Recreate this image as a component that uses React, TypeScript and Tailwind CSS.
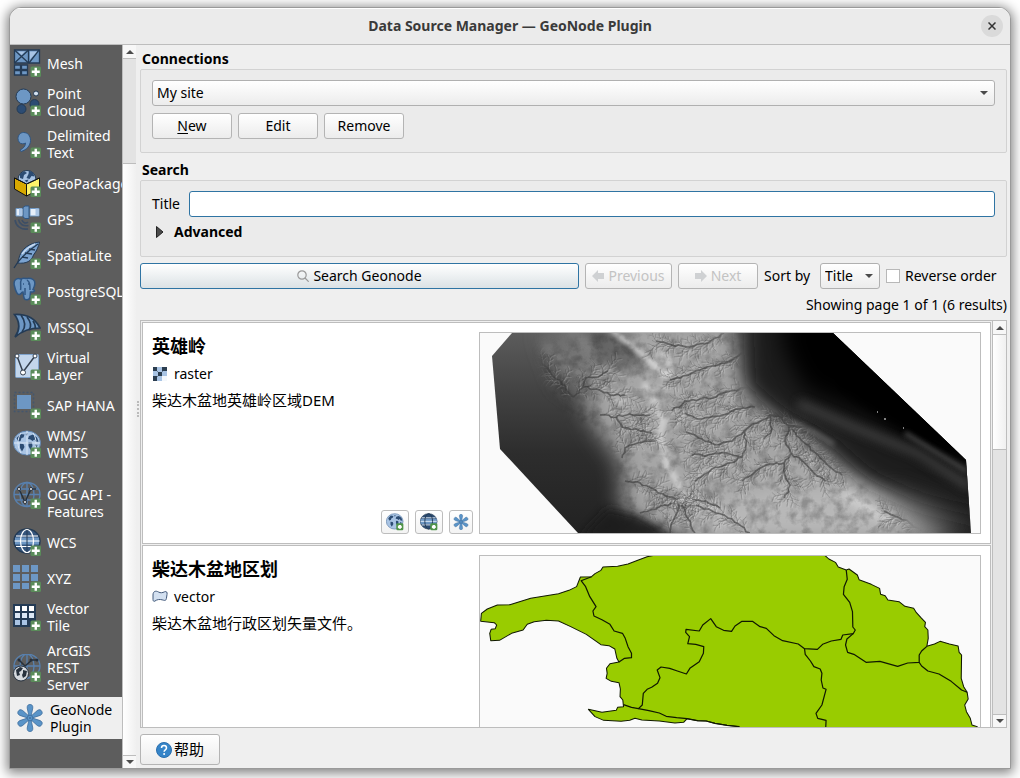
import React from "react";

type Pt = [number, number];

const INK = "#243b55";
const BLUE = "#6d97c4";
const LIGHT = "#a9c4e4";

/* ---------- sidebar icons ---------- */

function Badge() {
  return (
    <g>
      <rect x="17.5" y="17.5" width="10.500" height="10.500" rx="1.5" fill="#5a8c5a" />
      <path d="M22.750 18.800v8M18.750 22.800h8" stroke="#fff" strokeWidth="2.400" />
    </g>
  );
}

function Icon({ children, badge = true }: { children: React.ReactNode; badge?: boolean }) {
  return (
    <svg viewBox="0 0 28 28" className="h-7 w-7 shrink-0" fill="none" aria-hidden="true">
      {children}
      {badge && <Badge />}
    </svg>
  );
}

const GlobeLand = () => (
  <path
    d="M3.500 8l4-4 4 .5-1 3-2 .5-1 3-2.500.5zM7 13.500l3.500.5 1 3-2.500 4.500-2-3.500zM12.500 4l2.500-1-1 3zM16 6l4-1.500 4 3 1.500 4-2.500.5-1.500-2.500-2 1.500-2-1.500-2.500-.5zM15.500 12l3.500.5.5 3.500-2 4-2-4zM22 14l2.500 1-1 2.500-1.500-1z"
    fill="#2c4c73"
  />
);

const icons: Record<string, React.ReactNode> = {
  mesh: (
    <Icon>
      <g fill={BLUE} stroke={INK} strokeWidth="1.3">
        <path d="M1.500 1h14v13h-14zM15.500 1h11v13h-11z" />
        <path d="M1.500 1l14 13M15.500 1l-14 13M26 1L16 14" />
        <path d="M1.500 16h6v4.500h-6zM8.500 16h6v4.500h-6zM1.500 21.500h6v4.500h-6zM8.500 21.500h6v4.500h-6z" />
      </g>
      <path d="M17 2.500h7l-7 8zM5 2.500h7L8.500 6z" fill={LIGHT} />
    </Icon>
  ),
  point: (
    <Icon>
      <circle cx="10.500" cy="8.500" r="7.500" fill={BLUE} stroke={INK} />
      <circle cx="23" cy="5.500" r="2.500" fill="#d3e0f0" stroke={INK} />
      <circle cx="21.500" cy="16" r="4.500" fill="#2c4c73" stroke={INK} />
      <circle cx="8.500" cy="21" r="4.500" fill="#2c4c73" stroke={INK} />
    </Icon>
  ),
  comma: (
    <Icon>
      <path
        d="M10.500 2.500c4.500 0 7 3.500 7 8 0 5-4 9.500-9.500 11l-1-1.500c3.500-1.500 5.500-4 5.500-7-1 .7-2 .8-3 .8C6.500 13.800 5 11 5 8.500c0-3.500 2.500-6 5.500-6z"
        fill={BLUE}
        stroke="#2f5683"
      />
    </Icon>
  ),
  geopackage: (
    <Icon>
      <path d="M1.500 9l12 6v12l-12-7z" fill="#d8a900" stroke="#111" />
      <path d="M26.500 9l-13 6v12l13-7z" fill="#fdf36a" stroke="#111" />
      <path d="M5 10.500A9 9 0 1 1 23 10.500L13.500 15z" fill={LIGHT} stroke={INK} />
      <path d="M7 5l4-3 3 2-3 2-1 4-3-1zM16 1.500l4 2 1.500 4-3-.5-2 3-3-1 2-4zM11.500 11.500l4-1-1.500 3z" fill="#2c4c73" />
      <path d="M1.500 9l12 6 13-6" stroke="#111" />
    </Icon>
  ),
  gps: (
    <Icon>
      <path d="M3 3.500h8v7.500H3zM17 3.500h9V11h-9z" fill="#e6effa" stroke={BLUE} />
      <path d="M7.500 3.500V11M24 3.500V11" stroke={LIGHT} strokeWidth="3" />
      <path d="M10 2.500l2-1.500h4v12.500h-4L10 12z" fill={BLUE} stroke="#2f5683" />
      <path d="M15 17c-2 2-5 1-6-2M15.500 20.500c-5 1-9-1-10-6M15 24C8 25 3 21 2 15" stroke="#3c4e66" strokeWidth="1.600" />
    </Icon>
  ),
  feather: (
    <Icon>
      <path d="M26.500 1c-9 1-19 6-21 18l-1 3c9 1 14-2 16-8 3-4 5-8 6-13z" fill="#7ba3d0" stroke={INK} />
      <path d="M1 27C6 18 15 10 25 3M9 16l6 1M12 12l7 1M16 8l6 1" stroke={INK} strokeWidth="1.400" />
      <path d="M9 13c4-5 8-8 13-10" stroke="#c8dbf1" strokeWidth="1.500" />
    </Icon>
  ),
  postgres: (
    <Icon>
      <path
        d="M8 2C3 0 0 4 1.500 9c1 5 3 9 5 8.500 2-.5 2-2.500 3.500-2.500l1 6c1 3 6 2 6-1l.5-5c5 0 4.500-2 2.500-2.500 2-4 3-8 0-10-3-2-5-1-7-1-2-.5-3.500-.5-5 .5z"
        fill={BLUE}
        stroke="#2f5683"
        strokeWidth="1.500"
      />
      <path d="M8.500 2c-2 4 0 7-1 11M14 3c3 2 3 5 3 10M12 11v7M10 7h1M15 7h1" stroke="#2f5683" strokeWidth="1.500" />
    </Icon>
  ),
  mssql: (
    <Icon>
      <path d="M1.500 1.500C12 1 22 5 27 15c-9 0-18 3-25 9 5-7 5-15-.5-22.500z" fill={BLUE} stroke={INK} strokeWidth="1.700" />
      <path d="M8 2c5 7 5 12 1 17M14 4c4 5 5 9 2 13M20 8c2 3 3 5 2 8" stroke={INK} strokeWidth="1.700" />
    </Icon>
  ),
  virtual: (
    <Icon>
      <rect x="2.500" y="2.500" width="23" height="23" rx="1" fill="#c3d6ec" stroke="#7fa3cc" />
      <path d="M4 4l6 16L22 4" stroke="#34404f" strokeWidth="1.500" />
      <g fill="#fff" stroke="#34404f">
        <circle cx="4" cy="4" r="2" />
        <circle cx="22" cy="4" r="2" />
        <circle cx="10" cy="20.500" r="2.500" />
      </g>
    </Icon>
  ),
  hana: (
    <Icon>
      <rect x="1.500" y="1.500" width="19" height="19" stroke="#43566e" strokeWidth="1.500" strokeDasharray="2 2" />
      <rect x="4" y="4" width="14" height="14" fill={BLUE} />
    </Icon>
  ),
  wms: (
    <Icon>
      <ellipse cx="14" cy="13" rx="13.500" ry="12" fill={LIGHT} stroke="#6288b4" />
      <GlobeLand />
      <path d="M1 13h26M14 1v24M8 3C4 9 4 17 8 23M20 3c4 6 4 14 0 20" stroke="#d9e6f5" strokeWidth="1" />
    </Icon>
  ),
  wfs: (
    <Icon>
      <g stroke="#5880ae" strokeWidth="1.400">
        <ellipse cx="14" cy="13.500" rx="13" ry="12" />
        <ellipse cx="14" cy="13.500" rx="7" ry="12" />
        <path d="M1 13.500h26M3 8h22M3 19h22M14 2v23" />
      </g>
      <path d="M6 8l6 13 6-13h5" stroke="#26303c" strokeWidth="1.500" />
      <g fill="#fff" stroke="#26303c">
        <circle cx="6" cy="8" r="1.500" />
        <circle cx="18" cy="8" r="1.500" />
        <circle cx="12" cy="21" r="1.500" />
      </g>
    </Icon>
  ),
  wcs: (
    <Icon>
      <ellipse cx="14" cy="13" rx="13" ry="12" fill="#35557c" stroke={INK} strokeWidth="1.500" />
      <path d="M2 9.500h24v7H2z" fill={BLUE} />
      <path d="M1.500 13h25M3 8h22M3 18.500h22" stroke="#fff" strokeWidth="1.200" />
      <ellipse cx="14" cy="13" rx="6.500" ry="11.500" stroke="#fff" strokeWidth="1.200" />
      <path d="M14 2v22" stroke={INK} />
    </Icon>
  ),
  xyz: (
    <Icon>
      <path
        d="M0 1h7v7H0zM9 1h7v7H9zM18 1h7v7h-7zM0 10h7v7H0zM9 10h7v7H9zM18 10h7v7h-7zM0 19h7v6H0zM9 19h7v6H9z"
        fill={BLUE}
      />
    </Icon>
  ),
  tile: (
    <Icon>
      <rect x="0" y="1" width="23" height="23" fill={INK} />
      <path d="M2 3h5v5H2zM9 3h5v5H9zM16 3h5v5h-5z" fill="#fff" />
      <path d="M2 10h5v5H2zM9 10h5v5H9zM16 10h5v5h-5z" fill="#dbe7f5" />
      <path d="M2 17h5v5H2zM9 17h5v5H9z" fill={LIGHT} />
    </Icon>
  ),
  arcgis: (
    <Icon>
      <g stroke="#5880ae" strokeWidth="1.300">
        <ellipse cx="14" cy="12" rx="13" ry="12" />
        <ellipse cx="14" cy="12" rx="7" ry="12" />
        <path d="M1 12h26M14 0v24" />
      </g>
      <path d="M6 6l6 6 7-6h5" stroke="#26303c" strokeWidth="1.500" />
      <g fill="#26303c">
        <circle cx="6" cy="6" r="1.500" />
        <circle cx="18" cy="6" r="1.500" />
        <circle cx="24" cy="6" r="1.500" />
      </g>
      <circle cx="8" cy="19.500" r="7.500" fill="#d5d9de" stroke="#26303c" />
      <path d="M3 16l4-3 3 1-2 3-2 1 1 3-3 1zM10 16l4 1-1 5-3 2-1-3 1-2z" fill="#26303c" />
    </Icon>
  ),
};

function Flower({ className }: { className: string }) {
  return (
    <svg viewBox="0 0 28 28" className={className} fill="#5a94c8" stroke="#3f6f9e" strokeWidth=".8" aria-hidden="true">
      {[0, 60, 120, 180, 240, 300].map((a) => (
        <path
          key={a}
          transform={`rotate(${a} 14 14)`}
          d="M13 12.500L11.200 4C11 1.300 12.300.5 14 .5s3 .8 2.800 3.500L15 12.500z"
        />
      ))}
      <circle cx="14" cy="14" r="2.800" />
      <circle cx="14" cy="14" r="1" fill="#3f6f9e" stroke="none" />
    </svg>
  );
}

const sources = [
  { id: "mesh", lines: ["Mesh"] },
  { id: "point", lines: ["Point", "Cloud"] },
  { id: "comma", lines: ["Delimited", "Text"] },
  { id: "geopackage", lines: ["GeoPackage"] },
  { id: "gps", lines: ["GPS"] },
  { id: "feather", lines: ["SpatiaLite"] },
  { id: "postgres", lines: ["PostgreSQL"] },
  { id: "mssql", lines: ["MSSQL"] },
  { id: "virtual", lines: ["Virtual", "Layer"] },
  { id: "hana", lines: ["SAP HANA"] },
  { id: "wms", lines: ["WMS/", "WMTS"] },
  { id: "wfs", lines: ["WFS /", "OGC API -", "Features"] },
  { id: "wcs", lines: ["WCS"] },
  { id: "xyz", lines: ["XYZ"] },
  { id: "tile", lines: ["Vector", "Tile"] },
  { id: "arcgis", lines: ["ArcGIS", "REST", "Server"] },
];

const rowHeight = ["", "h-9", "h-[42px]", "h-[59px]"];

function Sidebar() {
  return (
    <nav className="flex w-28 shrink-0 flex-col overflow-hidden bg-[#5d5d5d] text-white" aria-label="Data sources">
      {sources.map((s) => (
        <button
          key={s.id}
          type="button"
          className={`flex shrink-0 items-center gap-1.5 pl-[3px] text-left leading-[17px] whitespace-nowrap ${rowHeight[s.lines.length]}`}
        >
          {icons[s.id]}
          <span>
            {s.lines.map((l) => (
              <span key={l} className="block">
                {l}
              </span>
            ))}
          </span>
        </button>
      ))}
      <button
        type="button"
        aria-current="page"
        className="flex h-[42px] shrink-0 items-center gap-1.5 bg-[#efefef] pl-1.5 text-left leading-[17px] whitespace-nowrap text-black"
      >
        <Flower className="h-7 w-7 shrink-0" />
        <span>
          <span className="block">GeoNode</span>
          <span className="block">Plugin</span>
        </span>
      </button>
    </nav>
  );
}

/* ---------- small parts ---------- */

function Triangle({ up = false }: { up?: boolean }) {
  return (
    <svg viewBox="0 0 8 4" className="h-1 w-2" fill="#4b4b4b" aria-hidden="true">
      <path d={up ? "M0 4L4 0l4 4z" : "M0 0h8L4 4z"} />
    </svg>
  );
}

const arrowBox = "flex h-[13px] shrink-0 items-center justify-center bg-[#f7f7f7]";
const buttonLook =
  "flex h-[26px] items-center justify-center rounded-[3px] border border-[#b4b4b4] bg-gradient-to-b from-white to-[#ececec]";

function SelectBox({ id, label, options, className }: { id: string; label?: string; options: string[]; className: string }) {
  return (
    <div className={`relative ${className}`}>
      <select
        id={id}
        aria-label={label}
        className="h-[26px] w-full appearance-none rounded-[3px] border border-[#b0b0b0] bg-gradient-to-b from-white to-[#ececec] pr-5 pl-1 outline-none"
      >
        {options.map((o) => (
          <option key={o}>{o}</option>
        ))}
      </select>
      <span className="pointer-events-none absolute top-[11px] right-[7px]">
        <Triangle />
      </span>
    </div>
  );
}

/* ---------- elevation thumbnail ---------- */

function makeRandom(seed: number) {
  let s = seed;
  return () => {
    s = (s * 1664525 + 1013904223) % 4294967296;
    return s / 4294967296;
  };
}

/* Each valley runs from its outlet up towards the ridge. */
const valleys: Pt[][] = [
  [[262, 20], [245, 30], [232, 33], [216, 38], [200, 45], [190, 47]],
  [[268, 55], [250, 58], [236, 64], [220, 66], [205, 68], [192, 78]],
  [[275, 74], [258, 76], [240, 83], [222, 86], [205, 80]],
  [[244, 0], [228, 10], [210, 14], [192, 12], [176, 8]],
  [[340, 88], [325, 94], [309, 93], [300, 84], [290, 82], [277, 90], [264, 98], [252, 108], [236, 112], [222, 106], [206, 99]],
  [[309, 93], [305, 108], [311, 120], [304, 130], [290, 131], [276, 138], [262, 148]],
  [[304, 130], [305, 142], [310, 152], [304, 165]],
  [[311, 120], [322, 128], [334, 140], [345, 148]],
  [[312, 96], [322, 108], [338, 122], [350, 134], [362, 142]],
  [[264, 98], [266, 112], [262, 124], [250, 130], [232, 136], [215, 148]],
  [[290, 82], [292, 96], [284, 106]],
  [[262, 124], [246, 120], [228, 122], [212, 122]],
  [[93, 64], [103, 54], [106, 45], [118, 44], [128, 38]],
  [[103, 54], [116, 56], [130, 62], [145, 62]],
  [[120, 82], [136, 84], [150, 81], [170, 82]],
  [[136, 84], [142, 94], [156, 96], [172, 100]],
  [[93, 64], [82, 50], [72, 42], [62, 30]],
  [[142, 125], [145, 115], [158, 110], [175, 108]],
  [[145, 148], [160, 150], [178, 160], [196, 166]],
  [[240, 175], [226, 168], [212, 166]],
  [[270, 200], [252, 186], [236, 180], [216, 172]],
  [[215, 200], [208, 186], [202, 172]],
  [[190, 200], [194, 186], [199, 172]],
  [[160, 180], [176, 176], [192, 170]],
  [[441, 198], [442, 190], [452, 188], [461, 183], [464, 196]],
  [[441, 196], [430, 190], [418, 184], [404, 178]],
];

function buildStreams() {
  const rand = makeRandom(7);
  const main: string[] = [];
  const fine: string[] = [];
  const grow = (x: number, y: number, angle: number, length: number, depth: number) => {
    let d = `M${x.toFixed(1)} ${y.toFixed(1)}`;
    let a = angle;
    let px = x;
    let py = y;
    const steps = Math.max(2, Math.round(length / 2.5));
    for (let i = 0; i < steps; i++) {
      a += (rand() - 0.5) * 0.5;
      px += Math.cos(a) * 2.5;
      py += Math.sin(a) * 2.5;
      d += `L${px.toFixed(1)} ${py.toFixed(1)}`;
      if (depth > 0) grow(px, py, a + (i % 2 ? -0.7 : 0.7), length * 0.42, depth - 1);
    }
    fine.push(d);
  };
  for (const line of valleys) {
    let d = `M${line[0][0]} ${line[0][1]}`;
    for (let i = 1; i < line.length; i++) {
      const [x0, y0] = line[i - 1];
      const [x1, y1] = line[i];
      const a = Math.atan2(y1 - y0, x1 - x0);
      const n = Math.max(2, Math.round(Math.hypot(x1 - x0, y1 - y0) / 4));
      for (let k = 1; k <= n; k++) {
        const last = k === n;
        const x = x0 + ((x1 - x0) * k) / n + (last ? 0 : (rand() - 0.5) * 2.4);
        const y = y0 + ((y1 - y0) * k) / n + (last ? 0 : (rand() - 0.5) * 2.4);
        d += `L${x.toFixed(1)} ${y.toFixed(1)}`;
        grow(x, y, a + (k % 2 ? -0.7 : 0.7), 7 + rand() * 10, 1);
      }
    }
    main.push(d);
  }
  return { main: main.join(""), fine: fine.join("") };
}

const streams = buildStreams();

function ElevationMap() {
  return (
    <svg viewBox="0 0 500 200" className="block h-[200px] w-full" role="img" aria-label="Elevation preview">
      <defs>
        <clipPath id="dem">
          <path d="M32 0L12 23l8 93 78 84h393l-5-73L353 0z" />
        </clipPath>
        <linearGradient id="basin" x1="0" y1="0" x2="0" y2="1">
          <stop offset="0" stopColor="#5c5c5c" />
          <stop offset=".3" stopColor="#424242" />
          <stop offset=".6" stopColor="#2d2d2d" />
          <stop offset="1" stopColor="#222" />
        </linearGradient>
        <filter id="b12" x="-30%" y="-30%" width="160%" height="160%">
          <feGaussianBlur stdDeviation="11" />
        </filter>
        <filter id="b5" x="-30%" y="-30%" width="160%" height="160%">
          <feGaussianBlur stdDeviation="5" />
        </filter>
        <filter id="b2" x="-30%" y="-30%" width="160%" height="160%">
          <feGaussianBlur stdDeviation="2.500" />
        </filter>
        <filter id="b1">
          <feGaussianBlur stdDeviation=".5" />
        </filter>
        <filter id="grain" x="0" y="0" width="100%" height="100%">
          <feTurbulence type="fractalNoise" baseFrequency=".09" numOctaves="4" seed="4" />
          <feColorMatrix values="0 0 0 0 0  0 0 0 0 0  0 0 0 0 0  -2.500 0 0 0 1.500" />
        </filter>
        <mask id="relief">
          <path
            d="M60 15l60-15h140l0 60 60 30 40 45 60 45 20 30H190l-48-30-8-60-40-35-25-30z"
            fill="#fff"
            filter="url(#b5)"
          />
        </mask>
      </defs>
      <rect width="500" height="200" fill="#fafafa" />
      <g clipPath="url(#dem)">
        <rect width="500" height="200" fill="url(#basin)" />
        <path d="M62-5h90l35 55-60 25-45-25z" fill="#747474" filter="url(#b12)" />
        <path
          d="M140-15h110l25 75 45 28 45 42 75 35 30 45H205l-62-26-2-54-24-34-12-22z"
          fill="#a6a6a6"
          filter="url(#b12)"
        />
        <path d="M108-5h32l28 32-22 12-30-10z" fill="#5d5d5d" opacity=".8" filter="url(#b5)" />
        <path
          d="M262-30h270v240l-34-26-58-14-52-24-38-34-50-28-34-30z"
          fill="#1c1c1c"
          filter="url(#b12)"
        />
        <path d="M300-20h70l150 160-60-15-66-38-70-30-20-40z" fill="#000" filter="url(#b12)" />
        <path d="M353-5l140 135-50-22-50-30-40-30z" fill="#000" filter="url(#b5)" />
        <path d="M318 70l60 26 60 24 52 34" stroke="#4c4c4c" strokeWidth="9" fill="none" opacity=".7" filter="url(#b5)" />
        <path d="M425 100l62 38" stroke="#5a5a5a" strokeWidth="4" fill="none" opacity=".8" filter="url(#b2)" />
        <path d="M205 178l90-24 60-2 50 24 25 30H225z" fill="#b8b8b8" filter="url(#b12)" />
        <path d="M312 90l22 9 20 12" stroke="#9a9a9a" strokeWidth="3" fill="none" opacity=".6" filter="url(#b2)" />
        <path d="M400 150l60 20 35 30h-50z" fill="#555" opacity=".6" filter="url(#b12)" />
        <path d="M100 205l28-30 30 7 40 25z" fill="#1c1c1c" opacity=".9" filter="url(#b5)" />
        <path d="M362 160l30 18 20 10" stroke="#e0e0e0" strokeWidth="8" fill="none" opacity=".8" filter="url(#b5)" />
        <path d="M88-2l16 10 8 14M62 10l20 20 30 16" stroke="#8f8f8f" strokeWidth="6" fill="none" opacity=".7" filter="url(#b5)" />
        <g fill="none" filter="url(#b2)" strokeLinecap="round">
          <path d="M132-2l22 16 18 16 14 12" stroke="#f4f4f4" strokeWidth="4" opacity=".85" />
          <path d="M176 20l12 4 3 14-6 8" stroke="#f0f0f0" strokeWidth="4" opacity=".7" />
          <path d="M165 52l12 22 6 18-4 10 8 30 16 26 4 10" stroke="#e0e0e0" strokeWidth="6" opacity=".75" />
          <path d="M204 166l20 4 24 10M206 150l30-14M182 88l24-4M166 58l-30 12M166 58l34-6" stroke="#d0d0d0" strokeWidth="5" opacity=".6" />
        </g>
        <g mask="url(#relief)">
          <rect width="500" height="200" filter="url(#grain)" opacity=".22" />
          <g fill="none" filter="url(#b1)">
            <path d={streams.fine} transform="translate(1.200 1)" stroke="#fff" strokeOpacity=".16" strokeWidth=".9" />
            <path d={streams.fine} stroke="#333" strokeOpacity=".26" strokeWidth=".9" />
            <path d={streams.main} stroke="#3c3c3c" strokeOpacity=".62" strokeWidth="1.700" />
          </g>
        </g>
        <path d="M397 79h1M404 86h2M423 95h1" stroke="#fff" strokeWidth="1.200" />
      </g>
    </svg>
  );
}

/* ---------- district thumbnail ---------- */

function DistrictMap() {
  return (
    <svg
      viewBox="14 33 1439 600"
      preserveAspectRatio="none"
      className="block h-[200px] w-full"
      role="img"
      aria-label="District preview"
    >
      <rect x="14" y="33" width="1439" height="600" fill="#fafafa" />
      <g fill="#99cc00" stroke="#101800" strokeWidth="3" strokeLinejoin="round">
        <path d="M520 30L495 35L470 45L440 57L410 64L368 66L362 76L345 86L335 95L303 96L292 125L270 136L240 146L160 160L100 179L64 180L35 192L18 205L16 229L55 233L62 240L58 251L46 253L42 265L45 287L70 286L105 265L138 255L150 238L170 230L205 226L240 228L275 245L320 268L362 299L385 302L402 312L408 340L414 351L388 356L378 370L380 385L377 400L392 409L414 413L418 432L417 455L425 465L427 485L410 487L406 496L365 502L326 493L345 515L370 526L420 529L445 526L460 520L480 525L530 528L575 534L600 532L610 521L640 527L665 528L690 535L725 541L760 545L800 640L1460 640L1445 545L1430 540L1425 520L1414 500L1409 480L1419 462L1416 442L1406 425L1399 400L1400 330L1393 322L1390 303L1365 297L1338 289L1322 297L1300 304L1304 280L1303 255L1294 245L1296 232L1283 218L1270 203L1262 190L1237 184L1220 170L1188 165L1180 152L1167 148L1164 130L1140 118L1105 104L1100 90L1076 72L1068 75L1045 66L1037 52L1018 42L1005 30Z" />
        <g fill="none" strokeWidth="3.500">
          <path d="M335 95L305 107L318 125L330 155L348 185L339 198L342 213L365 224L388 238L400 258L424 265L432 280L440 305L450 325L450 338L430 340L414 351" />
          <path d="M427 479L450 487L470 491L481 480L484 445L495 433L508 427L525 415L532 398L524 375L535 366L560 370L582 378L608 387L618 370L645 350L657 325L658 305L635 298L612 296L617 275L606 262L607 253L645 258L655 240L678 221L694 245L715 256L738 259L748 243L768 229L798 229L820 245L838 250L860 272L885 287L930 297L948 311L985 313L1000 298L1025 288L1053 283L1058 270L1088 266L1094 255L1087 246L1086 200L1078 172L1060 148L1062 125L1071 103L1068 75" />
          <path d="M470 491L500 497L530 504L550 514L580 518L610 521L640 527L665 528L690 535L725 541L760 545" />
          <path d="M948 311L950 328L965 348L975 365L993 372L998 385L996 405L1001 429L1010 433L998 480L981 505L986 520L1010 526L1005 640" />
          <path d="M1088 266L1070 282L1066 300L1072 322L1090 328L1125 352L1165 349L1216 364L1245 354L1278 352L1278 330L1285 318L1300 304" />
          <path d="M1278 352L1285 363L1303 378L1335 387L1370 409L1400 435L1416 442" />
        </g>
      </g>
    </svg>
  );
}

/* ---------- result cards ---------- */

function RasterIcon() {
  return (
    <svg viewBox="0 0 14 14" className="h-3.5 w-4" aria-hidden="true">
      <rect width="14" height="14" fill={LIGHT} />
      <path d="M0 0h4v4H0zM9 0h5v4H9zM5 5h4v4H5zM0 9h4v5H0z" fill="#2c3e50" />
      <path d="M9 9h5v5H9z" fill="#f4f8fc" />
      <path d="M4 4h1v1H4zM9 4h1v1H9zM4 9h1v1H4z" fill="#6d8099" />
    </svg>
  );
}

function VectorIcon() {
  return (
    <svg viewBox="0 0 16 14" className="h-3.5 w-4" aria-hidden="true">
      <path
        d="M1 9.500V5c0-4 3-4.500 5.500-3 2 1.200 4 .8 6-.2 2-.8 3 .5 2.500 2.700l-.6 4c-.4 2.500-2 2-3.500 1.500C7.500 9 5 9.500 3 11c-1.200.8-2 0-2-1.500z"
        fill="#d3e0f0"
        stroke="#41587a"
      />
    </svg>
  );
}

function MiniGlobe({ dark = false }: { dark?: boolean }) {
  return (
    <svg viewBox="0 0 28 28" className="h-[18px] w-[18px]" fill="none" aria-hidden="true">
      <ellipse cx="13.500" cy="13" rx="13" ry="12" fill={dark ? "#2c4c73" : LIGHT} stroke={dark ? INK : "#5a7da8"} />
      {dark ? (
        <g>
          <path d="M1 9h25v8H1z" fill={BLUE} />
          <path d="M1 13h25M3 7.500h21M3 18.500h21" stroke="#dfe9f5" strokeWidth="1.500" />
          <ellipse cx="13.500" cy="13" rx="6" ry="12" stroke={INK} strokeWidth="1.500" />
        </g>
      ) : (
        <GlobeLand />
      )}
      <rect x="16" y="16" width="11" height="11" rx="2" fill="#4f9448" />
      <path d="M21.500 18.500v6M18.500 21.500h6" stroke="#fff" strokeWidth="3.500" />
    </svg>
  );
}

const smallButton = "flex h-6 items-center justify-center rounded-[3px] border border-[#bdbdbd] bg-gradient-to-b from-white to-[#f3f3f3]";

function Card({
  title,
  kind,
  text,
  icon,
  children,
}: {
  title: string;
  kind: string;
  text: string;
  icon: React.ReactNode;
  children: React.ReactNode;
}) {
  return (
    <article className="flex shrink-0 gap-1.5 border border-[#bdbdbd] bg-white p-[9px]">
      <div className="flex min-w-0 flex-1 flex-col">
        <h3 className="h-7 text-lg leading-7 font-bold">{title}</h3>
        <p className="flex h-7 items-center gap-1.5">
          {icon}
          {kind}
        </p>
        <p className="text-[15px] leading-6">{text}</p>
        <div className="mt-auto flex justify-end gap-1.5">
          <button type="button" aria-label="Add as WMS" className={`w-7 ${smallButton}`}>
            <MiniGlobe />
          </button>
          <button type="button" aria-label="Add as WCS" className={`w-7 ${smallButton}`}>
            <MiniGlobe dark />
          </button>
          <button type="button" aria-label="Open in GeoNode" className={`w-6 ${smallButton}`}>
            <Flower className="h-4 w-4" />
          </button>
        </div>
      </div>
      <div className="h-[202px] w-[502px] shrink-0 overflow-hidden border border-[#bdbdbd]">{children}</div>
    </article>
  );
}

function FatArrow({ flip = false }: { flip?: boolean }) {
  return (
    <svg viewBox="0 0 12 12" className={flip ? "h-3 w-3 rotate-180" : "h-3 w-3"} fill="#cfd1d3" aria-hidden="true">
      <path d="M0 6l6-6v3h6v6H6v3z" />
    </svg>
  );
}

export default function App() {
  return (
    <div className="h-screen bg-white px-[9px] pt-[7px] pb-[9px] font-['Noto_Sans','Noto_Sans_CJK_SC',sans-serif] text-sm text-black">
      <div className="flex h-full flex-col overflow-hidden rounded-t-xl border border-[#9a9a9a] bg-[#efefef] shadow-[0_2px_12px_2px_rgba(0,0,0,0.5)]">
        <header className="grid h-[37px] shrink-0 grid-cols-[1fr_auto_1fr] items-center border-b border-[#bdbdbd] bg-[#ebebeb] px-[7px] shadow-[inset_0_1px_0_#fff]">
          <h1 className="col-start-2 font-bold text-[#3a3a3a]">Data Source Manager — GeoNode Plugin</h1>
          <button
            type="button"
            aria-label="Close"
            className="flex h-[22px] w-[22px] items-center justify-center justify-self-end rounded-full bg-[#dadada]"
          >
            <svg viewBox="0 0 8 8" className="h-2 w-2" stroke="#333" strokeWidth="1.500" aria-hidden="true">
              <path d="M.5.5l7 7M7.500.5l-7 7" />
            </svg>
          </button>
        </header>

        <div className="flex min-h-0 flex-1">
          <Sidebar />
          <div className="flex w-3.5 shrink-0 flex-col border-l border-[#bdbdbd]" aria-hidden="true">
            <div className={arrowBox}>
              <Triangle up />
            </div>
            <div className="h-[106px] border-y border-[#bdbdbd] bg-[#e3e3e3]" />
            <div className="flex-1 bg-gradient-to-r from-white to-[#f0f0f0]" />
            <div className={`border-t border-[#bdbdbd] ${arrowBox}`}>
              <Triangle />
            </div>
          </div>

          <main className="relative flex min-w-0 flex-1 flex-col pt-1 pr-[3px] pb-[3px] pl-1">
            <span className="absolute top-[356px] left-px h-4 border-l-2 border-dotted border-[#bbb]" aria-hidden="true" />
            <h2 className="h-5 pl-0.5 leading-5 font-bold">Connections</h2>
            <section className="flex flex-col gap-[7px] rounded-[2px] border border-[#d2d2d2] bg-[#ebebeb] px-[11px] pt-2.5 pb-[13px]">
              <SelectBox id="site" label="Connection" options={["My site"]} className="w-full" />
              <div className="flex gap-1.5">
                <button type="button" className={`w-20 ${buttonLook}`}>
                  <span>
                    <span className="underline underline-offset-2">N</span>ew
                  </span>
                </button>
                <button type="button" className={`w-20 ${buttonLook}`}>
                  Edit
                </button>
                <button type="button" className={`w-20 ${buttonLook}`}>
                  Remove
                </button>
              </div>
            </section>

            <h2 className="mt-[7px] h-5 pl-0.5 leading-5 font-bold">Search</h2>
            <section className="rounded-[2px] border border-[#d2d2d2] bg-[#ebebeb] px-[11px] pt-2.5 pb-3.5">
              <div className="flex items-center gap-1.5">
                <label htmlFor="title" className="w-[31px]">
                  Title
                </label>
                <input
                  id="title"
                  type="text"
                  className="h-[26px] min-w-0 flex-1 rounded-[3px] border border-[#2f74a3] bg-white px-1 outline-none"
                />
              </div>
              <button type="button" aria-expanded="false" className="mt-[5px] flex h-5 items-center gap-2.5 pl-1 font-bold">
                <svg viewBox="0 0 8 12" className="h-3 w-2" fill="#4b4b4b" stroke="#222" aria-hidden="true">
                  <path d="M.5.5L7 6 .5 11.500z" />
                </svg>
                Advanced
              </button>
            </section>

            <div className="mt-1.5 flex items-center gap-1.5">
              <button
                type="button"
                className="flex h-[26px] min-w-0 flex-1 items-center justify-center gap-1 rounded-[3px] border border-[#2f74a3] bg-gradient-to-b from-white to-[#dbe2e5]"
              >
                <svg viewBox="0 0 12 12" className="h-3 w-3" fill="none" stroke="#9a9a9a" strokeWidth="1.200" aria-hidden="true">
                  <circle cx="5" cy="5" r="4.200" />
                  <path d="M8 8l3.700 3.700" />
                </svg>
                Search Geonode
              </button>
              <button type="button" disabled className={`w-[87px] gap-1 text-[#c3c3c3] ${buttonLook}`}>
                <FatArrow />
                Previous
              </button>
              <button type="button" disabled className={`w-20 gap-1 text-[#c3c3c3] ${buttonLook}`}>
                <FatArrow flip />
                Next
              </button>
              <label htmlFor="sort" className="w-[50px] whitespace-nowrap">
                Sort by
              </label>
              <SelectBox id="sort" options={["Title"]} className="w-[60px]" />
              <label className="flex w-[121px] items-center gap-[5px] whitespace-nowrap">
                <input type="checkbox" className="h-3.5 w-3.5 appearance-none border border-[#b8b8b8] bg-white" />
                Reverse order
              </label>
            </div>
            <p className="mt-1.5 h-5 text-right leading-5">Showing page 1 of 1 (6 results)</p>

            <div className="mt-[5px] flex min-h-0 flex-1 border border-[#bdbdbd]">
              <div className="flex min-w-0 flex-1 flex-col gap-px overflow-hidden p-px">
                <Card title="英雄岭" kind="raster" text="柴达木盆地英雄岭区域DEM" icon={<RasterIcon />}>
                  <ElevationMap />
                </Card>
                <Card title="柴达木盆地区划" kind="vector" text="柴达木盆地行政区划矢量文件。" icon={<VectorIcon />}>
                  <DistrictMap />
                </Card>
              </div>
              <div className="flex w-3.5 shrink-0 flex-col border-l border-[#bdbdbd]" aria-hidden="true">
                <div className={arrowBox}>
                  <Triangle up />
                </div>
                <div className="h-[116px] border-y border-[#bdbdbd] bg-gradient-to-r from-white to-[#f0f0f0]" />
                <div className="flex-1 bg-[#e3e3e3]" />
                <div className={`border-t border-[#bdbdbd] ${arrowBox}`}>
                  <Triangle />
                </div>
              </div>
            </div>

            <button
              type="button"
              className="mt-1.5 flex h-[31px] w-20 shrink-0 items-center justify-center gap-0.5 rounded-[3px] border border-[#b4b4b4] bg-gradient-to-b from-white to-[#ececec] text-[15px]"
            >
              <svg viewBox="0 0 16 16" className="h-4 w-4" fill="none" aria-hidden="true">
                <circle cx="8" cy="8" r="7.500" fill="#3584c8" stroke="#2a6fae" />
                <path d="M5.500 6c0-3.200 5-3.200 5 0 0 1.800-2.400 1.900-2.400 3.700" stroke="#fff" strokeWidth="1.500" />
                <circle cx="8.100" cy="12" r="1" fill="#fff" />
              </svg>
              帮助
            </button>
          </main>
        </div>
      </div>
    </div>
  );
}
